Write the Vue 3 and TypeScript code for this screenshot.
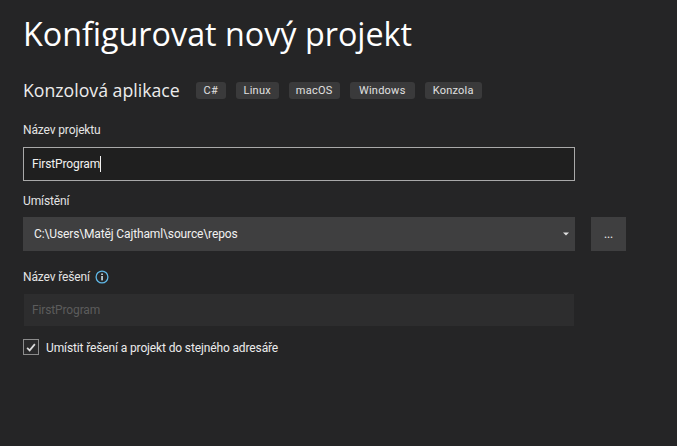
<script setup lang="ts">
const tags: { name: string; width: number }[] = [
  { name: 'C#', width: 30 },
  { name: 'Linux', width: 43 },
  { name: 'macOS', width: 51 },
  { name: 'Windows', width: 65 },
  { name: 'Konzola', width: 57 },
]
</script>

<template>
  <div class="page">
    <h1 class="title">Konfigurovat nový projekt</h1>
    <div class="sub">
      <span class="subname">Konzolová aplikace</span>
      <div class="tags">
        <span v-for="t in tags" :key="t.name" class="tag" :style="{ width: t.width + 'px' }">{{ t.name }}</span>
      </div>
    </div>
    <div class="label l1">Název projektu</div>
    <div class="input">
      <span>FirstProgram</span><i class="caret"></i>
    </div>
    <div class="label l2">Umístění</div>
    <div class="row">
      <div class="combo">
        <span>C:\Users\Matěj Cajthaml\source\repos</span>
        <svg class="arrow" width="6" height="4" viewBox="0 0 6 4"><path d="M0 0.5H6L3 3.5Z" fill="#e0e0e0" /></svg>
      </div>
      <div class="browse">...</div>
    </div>
    <div class="label l3">
      <span>Název řešení</span>
      <svg class="info" width="14" height="14" viewBox="0 0 14 14">
        <circle cx="7" cy="7" r="5.9" fill="none" stroke="#5fb7e6" stroke-width="1.3" />
        <rect x="6.3" y="6" width="1.5" height="4.4" fill="#d8eef9" />
        <rect x="6.3" y="3.5" width="1.5" height="1.5" fill="#d8eef9" />
      </svg>
    </div>
    <div class="disabled">FirstProgram</div>
    <div class="check">
      <span class="box">
        <svg width="10" height="9" viewBox="0 0 11 10"><path d="M1.2 5.4 4 8.2 9.8 1.2" fill="none" stroke="#dcdcdc" stroke-width="1.9" /></svg>
      </span>
      <span class="checktext">Umístit řešení a projekt do stejného adresáře</span>
    </div>
  </div>
</template>

<style scoped>
.page {
  width: 677px;
  height: 446px;
  box-sizing: border-box;
  padding: 0 0 0 23px;
  background: #252526;
  color: #f1f1f1;
  font-family: Roboto, "Open Sans", sans-serif;
  font-size: 12px;
  letter-spacing: -0.13px;
  overflow: hidden;
}
.title {
  margin: 0;
  padding-top: 11px;
  font-family: "Open Sans", sans-serif;
  font-size: 32.3px;
  line-height: 44px;
  font-weight: 400;
  letter-spacing: 0;
  color: #ffffff;
  white-space: nowrap;
}
.sub {
  display: flex;
  align-items: center;
  margin-top: 26px;
  height: 18px;
}
.subname {
  font-family: "Open Sans", sans-serif;
  font-size: 17.7px;
  line-height: 18px;
  letter-spacing: 0;
  color: #ececec;
  white-space: nowrap;
}
.tags {
  display: flex;
  gap: 10px;
  margin-left: 16px;
}
.tag {
  display: block;
  height: 17px;
  line-height: 17px;
  border-radius: 3px;
  background: #3a3a3b;
  color: #e0e0e0;
  font-size: 11px;
  letter-spacing: 0.25px;
  text-align: center;
}
.label {
  height: 18px;
  line-height: 18px;
  color: #e4e4e4;
  font-size: 12px;
}
.l1 { margin-top: 22px; }
.l2 { margin-top: 11px; }
.l3 {
  margin-top: 17px;
  display: flex;
  align-items: center;
  gap: 5px;
}
.input {
  margin-top: 8px;
  box-sizing: border-box;
  width: 552px;
  height: 34px;
  border: 1px solid #a9a9a9;
  background: #1f1f1f;
  padding-left: 8px;
  display: flex;
  align-items: center;
  color: #f1f1f1;
}
.caret {
  display: block;
  width: 1px;
  height: 16px;
  background: #f1f1f1;
}
.row {
  margin-top: 7px;
  display: flex;
  gap: 16px;
}
.combo {
  box-sizing: border-box;
  width: 552px;
  height: 34px;
  background: #3f3f40;
  padding: 0 6px 0 11px;
  display: flex;
  align-items: center;
  justify-content: space-between;
  color: #f1f1f1;
}
.browse {
  width: 35px;
  height: 34px;
  background: #3f3f40;
  display: flex;
  align-items: center;
  justify-content: center;
  color: #f1f1f1;
  font-size: 12px;
}
.disabled {
  margin: 8px 0 0 1px;
  box-sizing: border-box;
  width: 550px;
  height: 32px;
  padding-left: 8px;
  display: flex;
  align-items: center;
  background: #2d2d2e;
  color: #5c5c5c;
}
.check {
  margin-top: 13px;
  display: flex;
  align-items: flex-start;
  gap: 7px;
  color: #ececec;
}
.checktext {
  padding-top: 2px;
}
.box {
  box-sizing: border-box;
  width: 16px;
  height: 16px;
  border: 1px solid #8c8c8c;
  background: #2a2a2b;
  display: flex;
  align-items: center;
  justify-content: center;
}
</style>
